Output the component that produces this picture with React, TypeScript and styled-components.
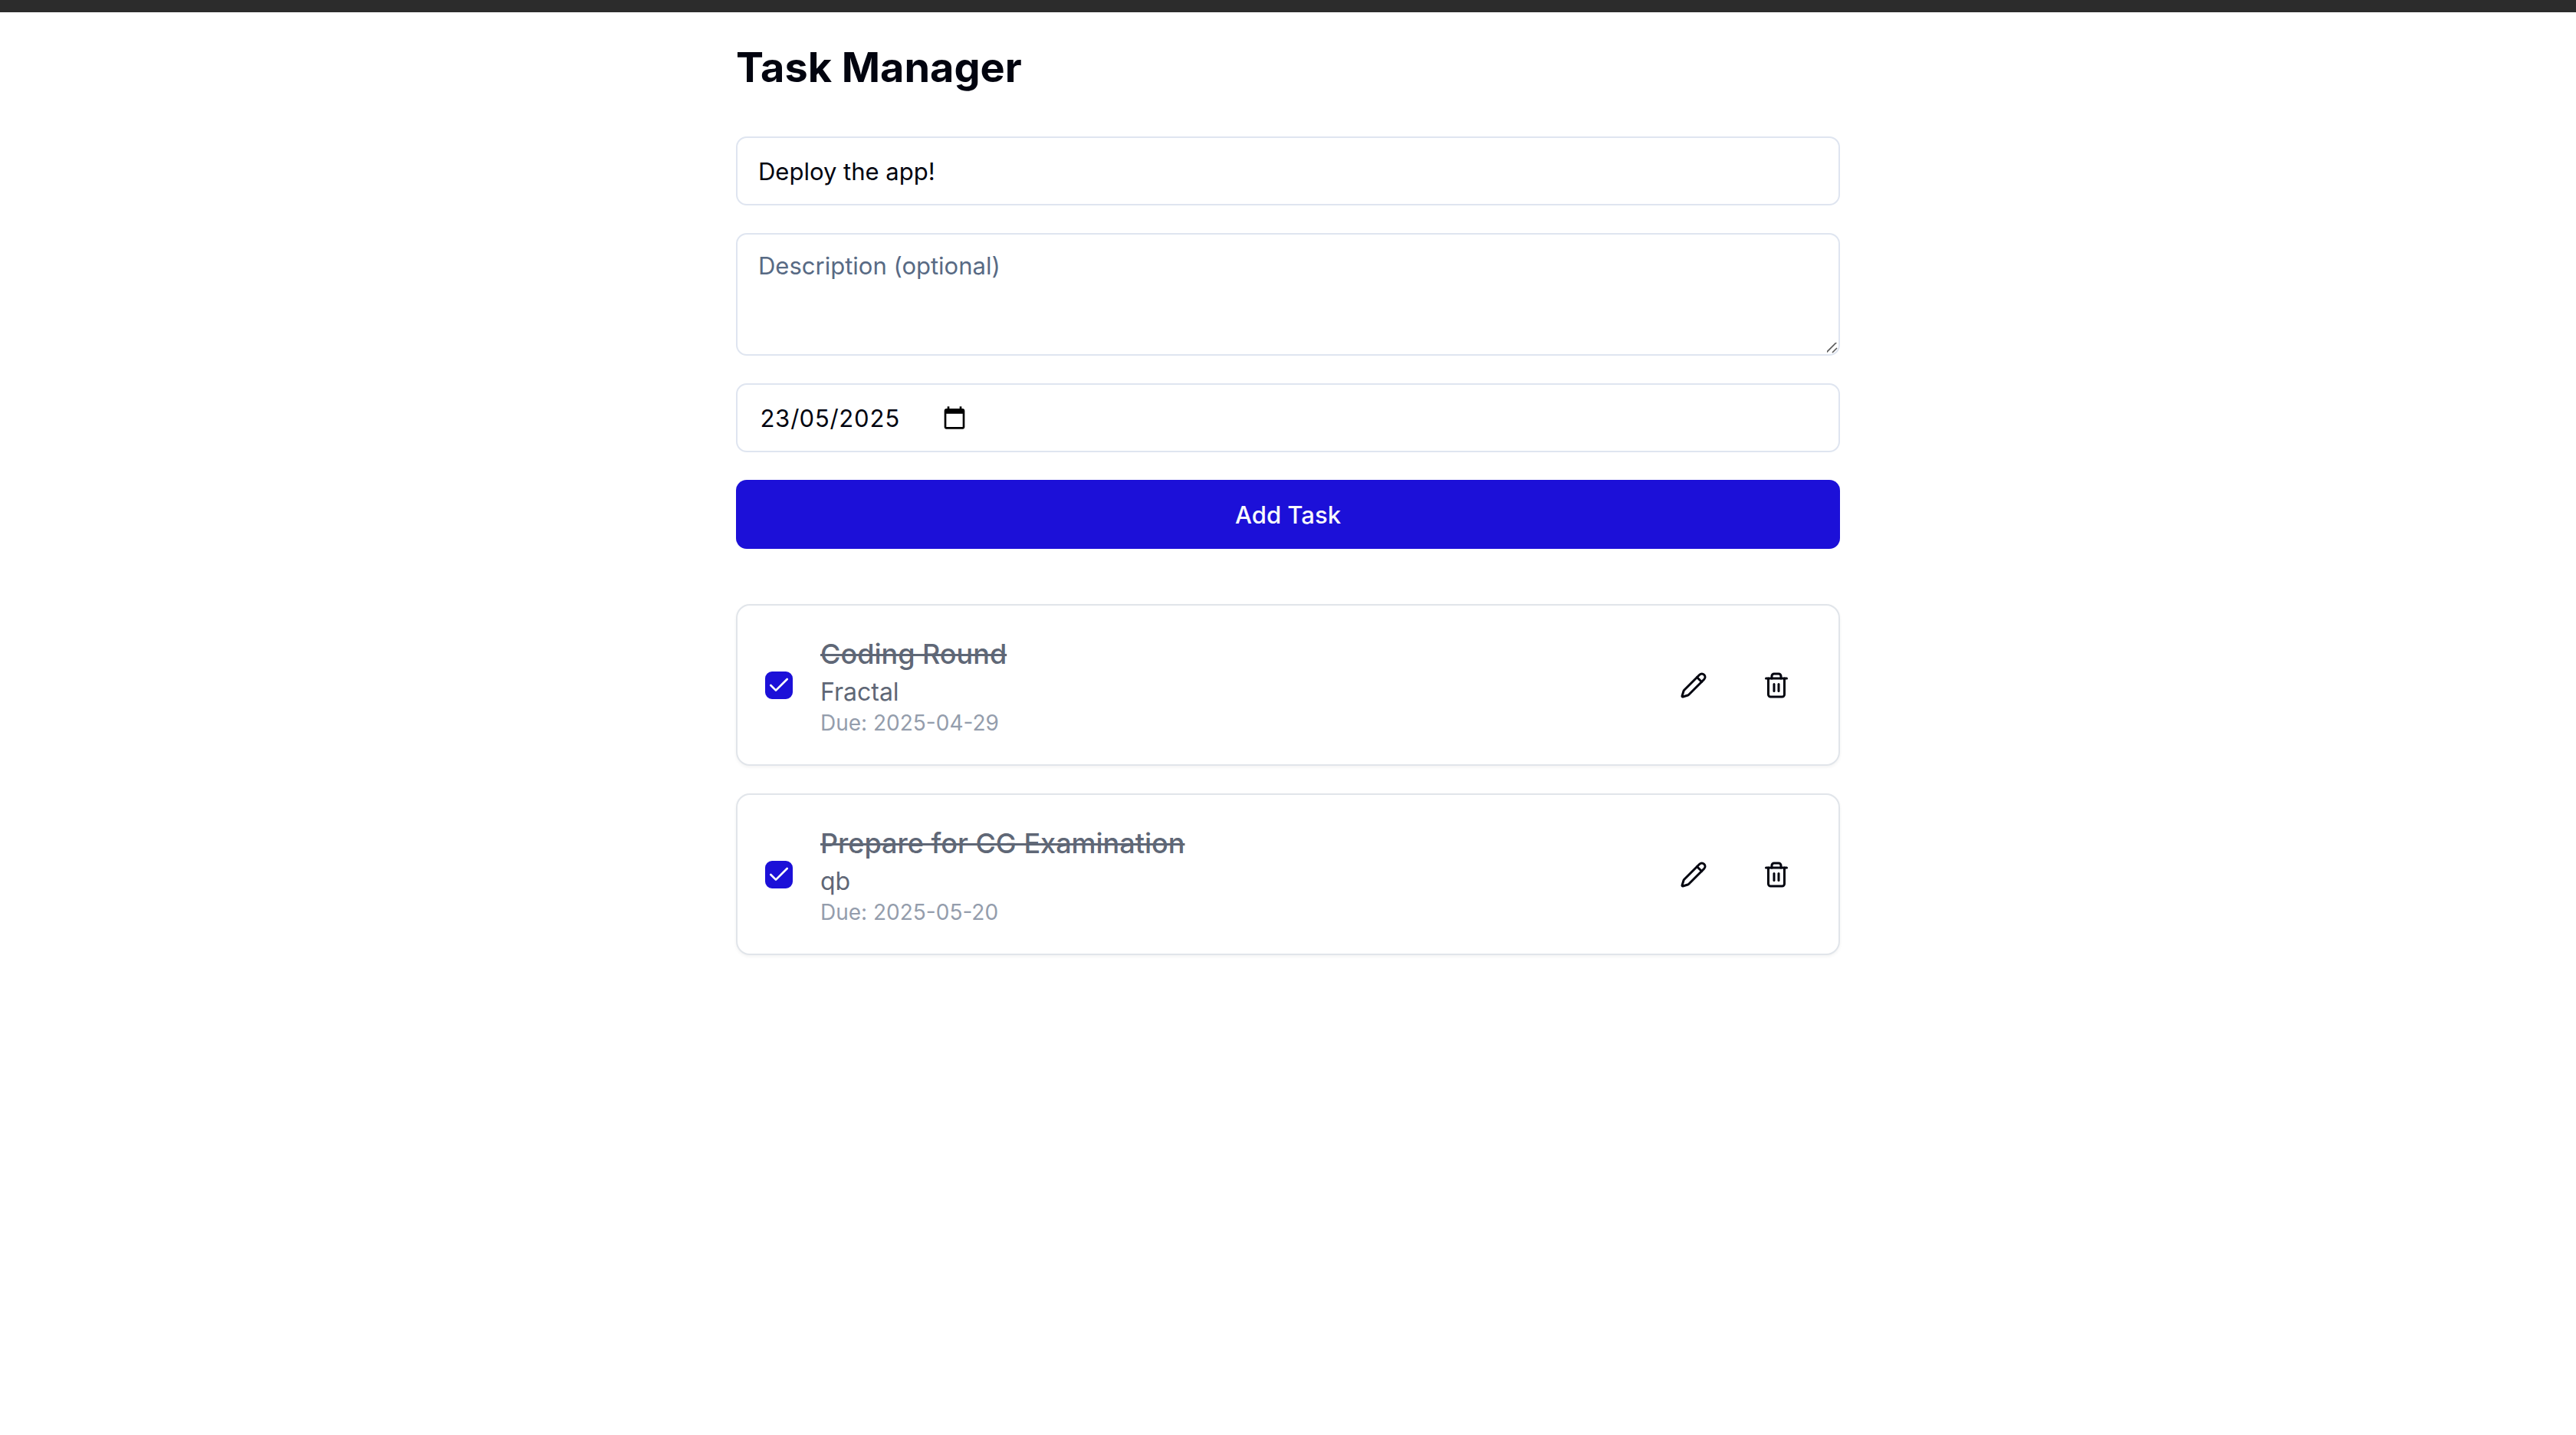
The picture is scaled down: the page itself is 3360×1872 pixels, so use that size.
import React, { useState } from "react";
import styled, { createGlobalStyle } from "styled-components";
import { Check, Pencil, Trash2 } from "lucide-react";

const color = {
  ink: "#02040f",
  muted: "#5f6776",
  faint: "#949dac",
  placeholder: "#586a84",
  inputLine: "#dfe5f0",
  cardLine: "#e1e5ea",
  primary: "#1c10d8",
  onPrimary: "#f8fafc",
  strip: "#2c2c2c",
};

const GlobalStyle = createGlobalStyle`
  *, *::before, *::after { box-sizing: border-box; }
  body {
    margin: 0;
    background: #fff;
    color: ${color.ink};
    font-family: Inter, "Liberation Sans", sans-serif;
  }
`;

const TopStrip = styled.div`
  height: 16px;
  background: ${color.strip};
`;

const Page = styled.main`
  max-width: 1512px;
  margin: 0 auto;
  padding: 36px;
`;

const Title = styled.h1`
  margin: 0 0 54px;
  font-size: 54px;
  line-height: 72px;
  font-weight: 700;
`;

const Form = styled.form`
  display: grid;
  gap: 36px;
  margin-bottom: 72px;
`;

const field = `
  width: 100%;
  margin: 0;
  border: 2px solid ${color.inputLine};
  border-radius: 14px;
  background: #fff;
  color: ${color.ink};
  font-family: inherit;
  font-size: 31px;
  line-height: 45px;
  outline: none;
`;

const TextInput = styled.input`
  ${field}
  height: 90px;
  padding: 0 27px;
`;

const resizeGrip = encodeURIComponent(
  '<svg xmlns="http://www.w3.org/2000/svg" width="18" height="18"><path d="M2 16 16 2M10 16l6-6" stroke="#5a5a5a" stroke-width="1.6" fill="none"/></svg>'
);

const TextArea = styled.textarea`
  ${field}
  display: block;
  height: 160px;
  padding: 18px 27px;
  resize: vertical;

  &::placeholder {
    color: ${color.placeholder};
    opacity: 1;
  }
  &::-webkit-scrollbar {
    width: 18px;
    height: 18px;
  }
  &::-webkit-resizer {
    background: url("data:image/svg+xml,${resizeGrip}") no-repeat right bottom;
  }
`;

const DateField = styled.div`
  ${field}
  display: flex;
  align-items: center;
  gap: 36px;
  height: 90px;
  padding: 0 27px;
`;

const DateInput = styled.input`
  width: 204px;
  padding: 0 2px;
  border: 0;
  background: transparent;
  color: inherit;
  font: inherit;
  font-variant-numeric: tabular-nums;
  outline: none;
`;

const PickerButton = styled.button`
  display: grid;
  padding: 0;
  border: 0;
  background: transparent;
  color: #000;
  cursor: pointer;
`;

const SubmitButton = styled.button`
  height: 90px;
  border: 0;
  border-radius: 14px;
  background: ${color.primary};
  color: ${color.onPrimary};
  font-family: inherit;
  font-size: 31px;
  line-height: 45px;
  font-weight: 500;
  cursor: pointer;
`;

const TaskList = styled.ul`
  display: grid;
  gap: 36px;
  margin: 0;
  padding: 0;
  list-style: none;
`;

const TaskCard = styled.li`
  display: flex;
  align-items: center;
  gap: 36px;
  padding: 36px;
  border: 2px solid ${color.cardLine};
  border-radius: 18px;
  background: #fff;
  box-shadow: 0 2px 4px rgba(0, 0, 0, 0.05);
`;

const CheckWrap = styled.span`
  position: relative;
  display: grid;
  place-items: center;
  width: 36px;
  height: 36px;
  color: ${color.onPrimary};

  svg {
    position: absolute;
    pointer-events: none;
  }
`;

const CheckInput = styled.input`
  appearance: none;
  width: 36px;
  height: 36px;
  margin: 0;
  border: 2px solid ${color.primary};
  border-radius: 9px;
  cursor: pointer;

  &:checked {
    background: ${color.primary};
  }
`;

const TaskText = styled.div`
  flex: 1;
  min-width: 0;
`;

const TaskTitle = styled.label<{ $done: boolean }>`
  display: block;
  width: fit-content;
  font-size: 36px;
  line-height: 54px;
  font-weight: 500;
  color: ${(p) => (p.$done ? color.muted : color.ink)};
  text-decoration: ${(p) => (p.$done ? "line-through" : "none")};
`;

const TaskNote = styled.p`
  margin: 0;
  font-size: 32px;
  line-height: 45px;
  color: ${color.muted};
`;

const TaskDue = styled.p`
  margin: 0;
  font-size: 28px;
  line-height: 36px;
  color: ${color.faint};
`;

const Actions = styled.div`
  display: flex;
  gap: 18px;
`;

const IconButton = styled.button`
  display: grid;
  place-items: center;
  width: 90px;
  height: 90px;
  padding: 0;
  border: 0;
  border-radius: 14px;
  background: transparent;
  color: ${color.ink};
  cursor: pointer;
`;

function CalendarIcon() {
  return (
    <svg width="32" height="32" viewBox="0 0 24 24" fill="currentColor" aria-hidden="true">
      <path d="M20 3h-1V1h-2v2H7V1H5v2H4c-1.1 0-2 .9-2 2v16c0 1.1.9 2 2 2h16c1.1 0 2-.9 2-2V5c0-1.1-.9-2-2-2zm0 18H4V8h16v13z" />
    </svg>
  );
}

interface Task {
  id: string;
  title: string;
  note: string;
  due: string;
  done: boolean;
}

const initialTasks: Task[] = [
  { id: "coding", title: "Coding Round", note: "Fractal", due: "2025-04-29", done: true },
  { id: "exam", title: "Prepare for CG Examination", note: "qb", due: "2025-05-20", done: true },
];

export default function App() {
  const [tasks, setTasks] = useState(initialTasks);
  const [title, setTitle] = useState("Deploy the app!");
  const [note, setNote] = useState("");
  const [date, setDate] = useState("23/05/2025");

  const addTask = (e: React.FormEvent) => {
    e.preventDefault();
    if (!title.trim()) return;
    const due = date.split("/").reverse().join("-");
    setTasks((list) => [...list, { id: String(Date.now()), title, note, due, done: false }]);
    setTitle("");
    setNote("");
  };

  const toggle = (id: string) =>
    setTasks((list) => list.map((t) => (t.id === id ? { ...t, done: !t.done } : t)));

  const remove = (id: string) => setTasks((list) => list.filter((t) => t.id !== id));

  return (
    <>
      <GlobalStyle />
      <TopStrip />
      <Page>
        <Title>Task Manager</Title>
        <Form onSubmit={addTask}>
          <TextInput aria-label="Task title" value={title} onChange={(e) => setTitle(e.target.value)} />
          <TextArea
            aria-label="Description"
            placeholder="Description (optional)"
            value={note}
            onChange={(e) => setNote(e.target.value)}
          />
          <DateField>
            <DateInput aria-label="Due date" value={date} onChange={(e) => setDate(e.target.value)} />
            <PickerButton type="button" aria-label="Open calendar">
              <CalendarIcon />
            </PickerButton>
          </DateField>
          <SubmitButton type="submit">Add Task</SubmitButton>
        </Form>
        <TaskList>
          {tasks.map((t) => (
            <TaskCard key={t.id}>
              <CheckWrap>
                <CheckInput type="checkbox" id={t.id} checked={t.done} onChange={() => toggle(t.id)} />
                {t.done && <Check size={32} />}
              </CheckWrap>
              <TaskText>
                <TaskTitle htmlFor={t.id} $done={t.done}>
                  {t.title}
                </TaskTitle>
                {t.note && <TaskNote>{t.note}</TaskNote>}
                <TaskDue>Due: {t.due}</TaskDue>
              </TaskText>
              <Actions>
                <IconButton type="button" aria-label={`Edit ${t.title}`}>
                  <Pencil size={36} />
                </IconButton>
                <IconButton type="button" aria-label={`Delete ${t.title}`} onClick={() => remove(t.id)}>
                  <Trash2 size={36} />
                </IconButton>
              </Actions>
            </TaskCard>
          ))}
        </TaskList>
      </Page>
    </>
  );
}
